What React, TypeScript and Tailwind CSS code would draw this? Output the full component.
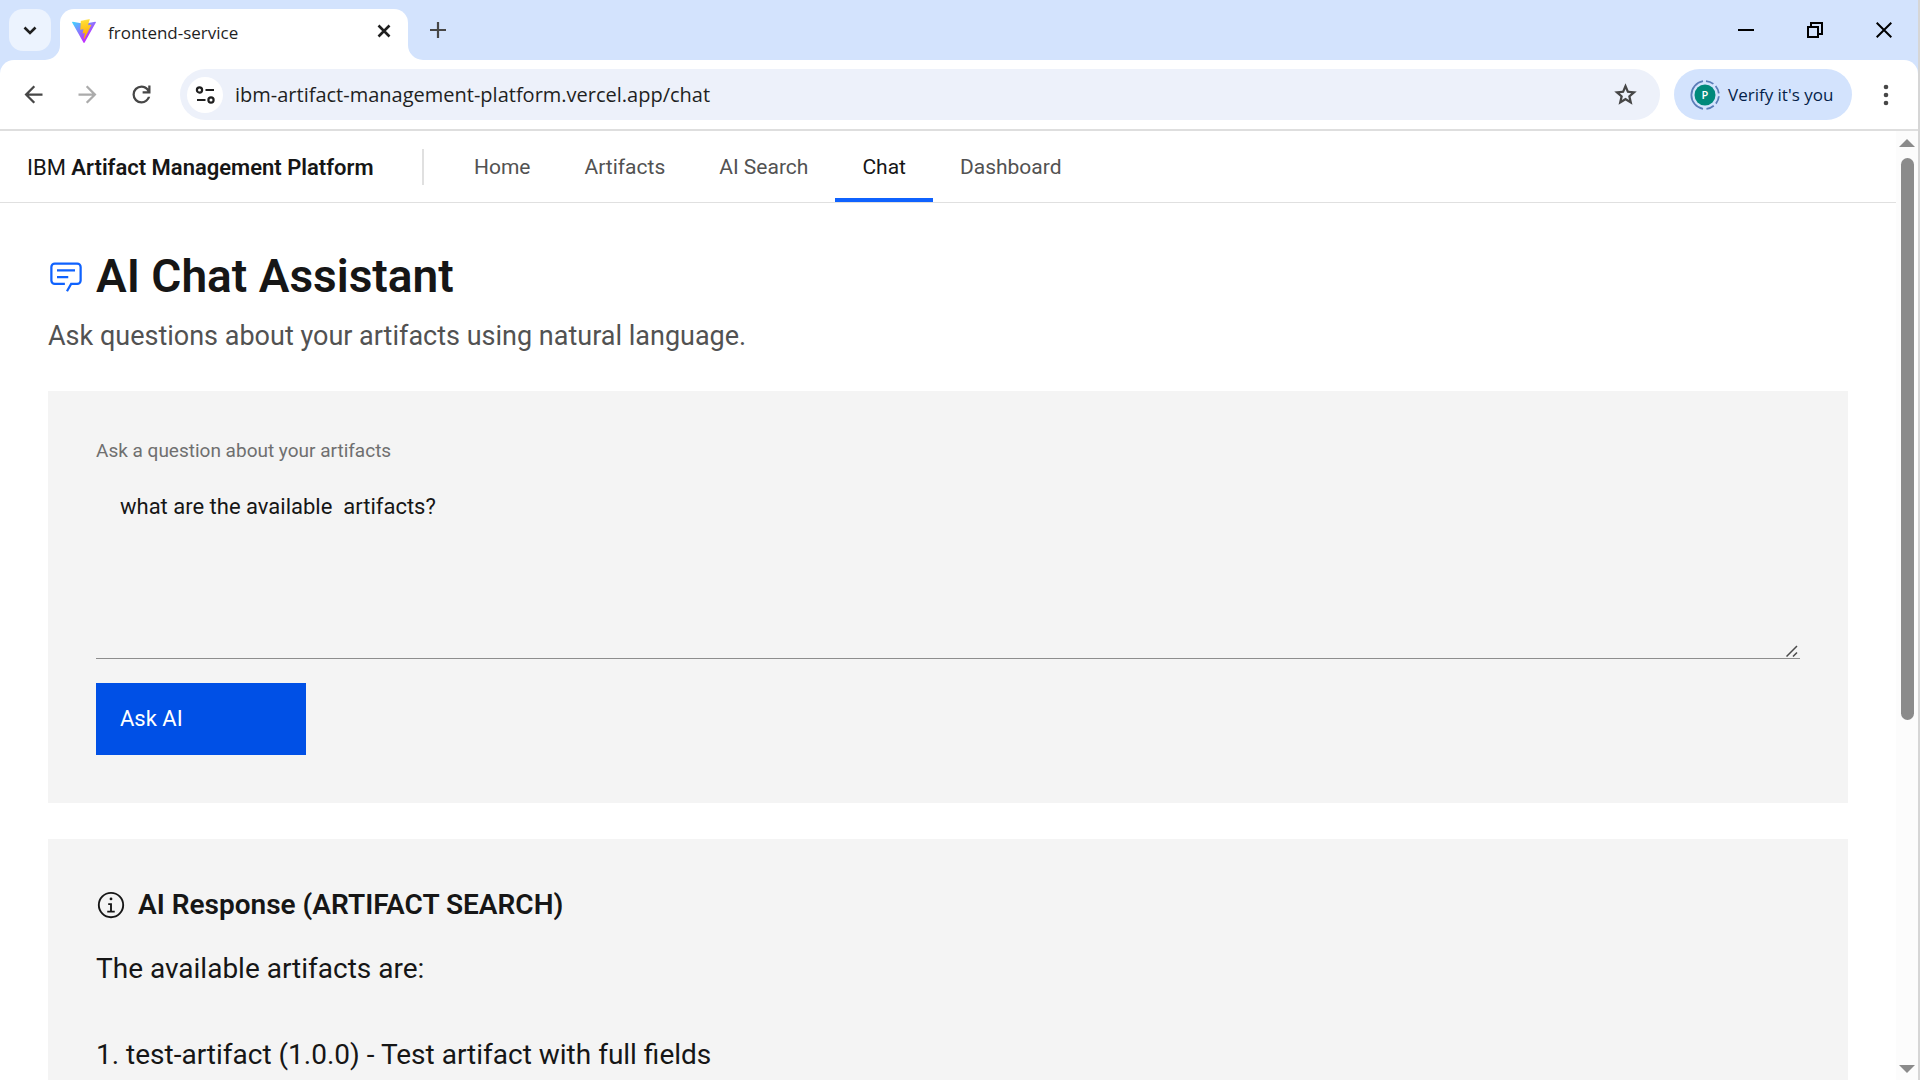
import { useState } from 'react';

const NAV_ITEMS = ['Home', 'Artifacts', 'AI Search', 'Chat', 'Dashboard'];

const ANSWER = `The available artifacts are:

1. test-artifact (1.0.0) - Test artifact with full fields`;

function Symbol({ d }: { d: string }) {
  return (
    <svg viewBox="0 -960 960 960" fill="currentColor" className="size-[27px]" aria-hidden="true">
      <path d={d} />
    </svg>
  );
}

function ViteLogo() {
  return (
    <svg viewBox="0 0 256 257" className="size-6 shrink-0" aria-hidden="true">
      <defs>
        <linearGradient id="vite-body" x1="-.828%" x2="57.636%" y1="7.652%" y2="78.411%">
          <stop offset="0%" stopColor="#41D1FF" />
          <stop offset="100%" stopColor="#BD34FE" />
        </linearGradient>
        <linearGradient id="vite-bolt" x1="43.376%" x2="50.316%" y1="2.242%" y2="89.03%">
          <stop offset="0%" stopColor="#FFEA83" />
          <stop offset="8.333%" stopColor="#FFDD35" />
          <stop offset="100%" stopColor="#FFA800" />
        </linearGradient>
      </defs>
      <path
        fill="url(#vite-body)"
        d="M255.153 37.938L134.897 252.976c-2.483 4.44-8.862 4.466-11.382.048L.875 37.958c-2.746-4.814 1.371-10.646 6.827-9.67l120.385 21.517a6.537 6.537 0 0 0 2.322-.004l117.867-21.483c5.438-.991 9.574 4.796 6.877 9.62Z"
      />
      <path
        fill="url(#vite-bolt)"
        d="M185.432.063L96.44 17.501a3.268 3.268 0 0 0-2.634 3.014l-5.474 92.456a3.268 3.268 0 0 0 3.997 3.378l24.777-5.718c2.318-.535 4.413 1.507 3.936 3.838l-7.361 36.047c-.495 2.426 1.782 4.5 4.151 3.78l15.304-4.649c2.372-.72 4.652 1.36 4.15 3.788l-11.698 56.621c-.732 3.542 3.979 5.473 5.943 2.437l1.313-2.028l72.516-144.72c1.215-2.423-.88-5.186-3.54-4.672l-25.505 4.922c-2.396.462-4.435-1.77-3.759-4.114l16.646-57.705c.677-2.35-1.37-4.583-3.769-4.113Z"
      />
    </svg>
  );
}

function TabStrip() {
  return (
    <div className="flex h-[60px] shrink-0 items-center bg-[#d3e3fd]">
      <button aria-label="Search tabs" className="ml-[9px] flex size-[42px] items-center justify-center rounded-[14px] bg-[#ecf3fe] text-[#1f1f1f]">
        <svg viewBox="0 0 14 9" className="h-[9px] w-3.5" fill="none" stroke="currentColor" strokeWidth="2.6" aria-hidden="true">
          <path d="M1.5 1.5 7 7l5.5-5.5" />
        </svg>
      </button>
      <div className="relative ml-[9px] flex h-[51px] w-[348px] items-center self-end rounded-t-[14px] bg-white pr-2.5 pb-2 pl-3">
        <svg viewBox="0 0 15 15" className="absolute bottom-0 -left-[15px] size-[15px]" fill="#fff" aria-hidden="true">
          <path d="M15 0v15H0A15 15 0 0 0 15 0Z" />
        </svg>
        <ViteLogo />
        <span className="ml-3 flex-1 pt-1 text-[17px] leading-6 text-[#1f1f1f]">frontend-service</span>
        <button aria-label="Close tab" className="flex size-7 items-center justify-center text-[#1f1f1f]">
          <svg viewBox="0 0 14 14" className="size-3.5" fill="none" stroke="currentColor" strokeWidth="2.6" aria-hidden="true">
            <path d="m1.5 1.5 11 11m0-11-11 11" />
          </svg>
        </button>
        <svg viewBox="0 0 15 15" className="absolute -right-[15px] bottom-0 size-[15px]" fill="#fff" aria-hidden="true">
          <path d="M0 0v15h15A15 15 0 0 1 0 0Z" />
        </svg>
      </div>
      <button aria-label="New tab" className="ml-[9px] flex size-[42px] items-center justify-center text-[#474747]">
        <svg viewBox="0 0 16 16" className="size-4" fill="none" stroke="currentColor" strokeWidth="2.2" aria-hidden="true">
          <path d="M8 0v16M0 8h16" />
        </svg>
      </button>
      <div className="ml-auto flex h-full text-black">
        <button aria-label="Minimize" className="flex w-[69px] items-center justify-center">
          <span className="h-0.5 w-4 bg-black" />
        </button>
        <button aria-label="Restore" className="flex w-[69px] items-center justify-center">
          <svg viewBox="0 0 16 16" className="size-4" fill="none" stroke="currentColor" strokeWidth="2" aria-hidden="true">
            <path d="M1 5h10v10H1zM4 5V1h11v11h-4" />
          </svg>
        </button>
        <button aria-label="Close window" className="flex w-[69px] items-center justify-center">
          <svg viewBox="0 0 16 16" className="size-4" fill="none" stroke="currentColor" strokeWidth="2" aria-hidden="true">
            <path d="m.7.7 14.6 14.6m0-14.6L.7 15.3" />
          </svg>
        </button>
      </div>
    </div>
  );
}

function Toolbar() {
  return (
    <div className="shrink-0 bg-[#d3e3fd]">
      <div className="flex h-[71px] items-center rounded-t-[14px] border-b-2 border-[#dedede] bg-white pr-[5px] pl-1.5 text-[#474747]">
        <button aria-label="Back" className="flex w-[54px] justify-center">
          <Symbol d="m313-440 224 224-57 56-320-320 320-320 57 56-224 224h487v80H313Z" />
        </button>
        <button aria-label="Forward" className="flex w-[54px] justify-center text-[#ababab]">
          <Symbol d="M647-440H160v-80h487L423-744l57-56 320 320-320 320-57-56 224-224Z" />
        </button>
        <button aria-label="Reload" className="flex w-[54px] justify-center">
          <Symbol d="M480-160q-134 0-227-93t-93-227q0-134 93-227t227-93q69 0 132 28.5T720-690v-110h80v280H520v-80h168q-32-56-87.5-88T480-720q-100 0-170 70t-70 170q0 100 70 170t170 70q77 0 139-44t87-116h84q-28 106-114 173t-196 67Z" />
        </button>
        <div className="ml-3 flex h-[51px] flex-1 items-center rounded-full bg-[#edf1fa] pr-[21px] pl-[7px]">
          <button aria-label="View site information" className="flex size-9 items-center justify-center rounded-full bg-white text-[#1f1f1f]">
            <svg viewBox="0 0 20 18" className="h-[18px] w-5" fill="none" stroke="currentColor" strokeWidth="2.2" aria-hidden="true">
              <circle cx="4.5" cy="4" r="2.6" />
              <path d="M10.5 4H19M2 14h8.500" />
              <circle cx="16" cy="14" r="2.6" />
            </svg>
          </button>
          <input
            type="text"
            aria-label="Address"
            defaultValue="ibm-artifact-management-platform.vercel.app/chat"
            className="ml-3 min-w-0 flex-1 bg-transparent text-[20px] leading-7 text-[#1f1f1f] outline-none"
          />
          <button aria-label="Bookmark this page">
            <Symbol d="m354-287 126-76 126 77-33-144 111-96-146-13-58-136-58 135-146 13 111 97-33 143ZM233-120l65-281L80-590l288-25 112-265 112 265 288 25-218 189 65 281-247-149-247 149Z" />
          </button>
        </div>
        <button className="ml-3.5 flex h-[51px] w-[178px] items-center gap-2 rounded-full bg-[#d3e3fd] pl-4 text-[17px] leading-6 text-[#041e49]">
          <svg viewBox="0 0 30 30" className="size-[30px] shrink-0" aria-hidden="true">
            <g fill="none" stroke="#5b7db8" strokeWidth="1.8">
              <path d="M13 1.2A14 14 0 0 0 13 28.8" />
              <path d="M16 1.1A14 14 0 0 1 28.9 16A14 14 0 0 1 16 28.9" strokeDasharray="8 3" />
            </g>
            <circle cx="15" cy="15" r="10.5" fill="#00897b" />
            <text x="15" y="19" textAnchor="middle" fontSize="11" fontWeight="600" fill="#fff">P</text>
          </svg>
          Verify it&apos;s you
        </button>
        <button aria-label="Browser menu" className="ml-[7px] flex w-[54px] justify-center">
          <svg viewBox="0 0 6 22" className="h-[22px] w-1.5" fill="currentColor" aria-hidden="true">
            <circle cx="3" cy="3" r="2.3" />
            <circle cx="3" cy="11" r="2.3" />
            <circle cx="3" cy="19" r="2.3" />
          </svg>
        </button>
      </div>
    </div>
  );
}

function SiteHeader() {
  return (
    <header className="flex h-[72px] items-center border-b border-[#e0e0e0] bg-white">
      <a href="#home" className="w-[422px] shrink-0 pt-0.5 pl-[27px] text-[22px] leading-7 whitespace-nowrap text-[#161616]">
        IBM <span className="font-semibold">Artifact Management Platform</span>
      </a>
      <div className="h-9 w-0.5 bg-[#e0e0e0]" />
      <nav className="ml-[23px] flex h-full text-[21px] leading-7">
        {NAV_ITEMS.map((item) => (
          <a
            key={item}
            href={`#${item}`}
            aria-current={item === 'Chat' ? 'page' : undefined}
            className={
              item === 'Chat'
                ? 'flex items-center border-b-4 border-[#0f62fe] px-[27px] pt-1 text-[#161616]'
                : 'flex items-center px-[27px] text-[#525252]'
            }
          >
            {item}
          </a>
        ))}
      </nav>
    </header>
  );
}

function Scrollbar() {
  return (
    <div className="flex w-[22px] shrink-0 flex-col items-center bg-[#fcfcfc] pt-2 pb-[7px] text-[#8b8b8b]" aria-hidden="true">
      <svg viewBox="0 0 16 8" className="h-2 w-4" fill="currentColor">
        <path d="M8 0l8 8H0z" />
      </svg>
      <div className="mt-[11px] flex w-[13px] flex-1 flex-col">
        <div className="h-[62%] rounded-full bg-[#8b8b8b]" />
      </div>
      <svg viewBox="0 0 16 8" className="h-2 w-4" fill="currentColor">
        <path d="M0 0h16L8 8z" />
      </svg>
    </div>
  );
}

export default function App() {
  const [question, setQuestion] = useState('what are the available  artifacts?');

  return (
    <div className="flex h-screen overflow-hidden bg-white font-['Open_Sans',sans-serif]">
      <div className="flex min-w-0 flex-1 flex-col">
        <TabStrip />
        <Toolbar />
        <div className="flex min-h-0 flex-1 font-['Roboto',sans-serif]">
          <div className="min-w-0 flex-1 overflow-hidden text-[#161616]">
            <SiteHeader />
            <main className="px-12 pt-[43px]">
              <h1 className="flex h-[60px] items-center gap-3 text-[46px] leading-[60px] font-semibold">
                <svg viewBox="0 0 32 32" className="size-9 shrink-0" fill="#0f62fe" aria-hidden="true">
                  <path d="M17.74 30 16 29l4-7h6a2 2 0 0 0 2-2V8a2 2 0 0 0-2-2H6a2 2 0 0 0-2 2v12a2 2 0 0 0 2 2h9v2H6a4 4 0 0 1-4-4V8a4 4 0 0 1 4-4h20a4 4 0 0 1 4 4v12a4 4 0 0 1-4 4h-4.84Z" />
                  <path d="M8 10h16v2H8zM8 16h10v2H8z" />
                </svg>
                AI Chat Assistant
              </h1>
              <p className="mt-3 text-[27px] leading-9 text-[#525252]">
                Ask questions about your artifacts using natural language.
              </p>

              <form className="mt-[37px] bg-[#f4f4f4] p-12" onSubmit={(e) => e.preventDefault()}>
                <label htmlFor="question" className="block text-[19px] leading-6 text-[#6f6f6f]">
                  Ask a question about your artifacts
                </label>
                <div className="relative mt-3">
                  <textarea
                    id="question"
                    value={question}
                    onChange={(e) => setQuestion(e.target.value)}
                    className="block h-[184px] w-full resize-none border-b border-[#8d8d8d] bg-transparent px-6 py-[18px] text-[22px] leading-[27px] outline-none"
                  />
                  <svg viewBox="0 0 12 12" className="absolute right-0.5 bottom-0.5 size-3" fill="none" stroke="#4a4a4a" strokeWidth="1.5" aria-hidden="true">
                    <path d="M.5 11.5 11 1M7 11.5l4-4" />
                  </svg>
                </div>
                <button type="submit" className="mt-6 block h-[72px] w-[210px] bg-[#0050e6] px-6 text-left text-[22px] leading-7 text-white">
                  Ask AI
                </button>
              </form>

              <section className="mt-9 bg-[#f4f4f4] p-12">
                <h2 className="flex items-center gap-3 text-[28px] leading-9 font-semibold">
                  <svg viewBox="0 0 32 32" className="size-[30px] shrink-0" fill="currentColor" aria-hidden="true">
                    <path d="M17 22v-8h-4v2h2v6h-3v2h8v-2zM16 8a1.5 1.5 0 1 0 1.5 1.5A1.5 1.5 0 0 0 16 8z" />
                    <path d="M16 30a14 14 0 1 1 14-14 14 14 0 0 1-14 14zm0-26a12 12 0 1 0 12 12A12 12 0 0 0 16 4z" />
                  </svg>
                  AI Response (ARTIFACT SEARCH)
                </h2>
                <p className="mt-6 text-[28px] leading-[43px] whitespace-pre-wrap">{ANSWER}</p>
              </section>
            </main>
          </div>
          <Scrollbar />
        </div>
      </div>
      <div className="w-0.5 shrink-0 bg-[#d6d6d6]" />
    </div>
  );
}
